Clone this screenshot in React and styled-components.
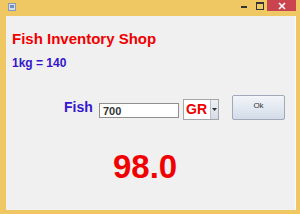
import React from 'react'
import styled, { createGlobalStyle } from 'styled-components'

const GlobalStyle = createGlobalStyle`
  html, body {
    margin: 0;
    padding: 0;
    background: #efc864;
  }
  body {
    font-family: "Liberation Sans", Arial, sans-serif;
  }
`

export default () => {
  return (
    <>
      <GlobalStyle />
      <Window>
        <TitleBar>
          <AppIcon viewBox="0 0 8 8">
            <rect x="0.5" y="0.5" width="7" height="7" fill="#d7dde8" stroke="#8c9bb5" strokeWidth="1" />
            <rect x="2" y="2" width="4" height="3" fill="#6f8fc4" />
          </AppIcon>
          <Spacer />
          <Minimize />
          <Maximize />
          <Close>
            <svg width="8" height="8" viewBox="0 0 8 8">
              <path d="M1 1 L7 7 M7 1 L1 7" stroke="#fff" strokeWidth="1.6" />
            </svg>
          </Close>
        </TitleBar>
        <Content>
          <Title>Fish Inventory Shop</Title>
          <Rate>1kg = 140</Rate>
          <Row>
            <FieldLabel>Fish</FieldLabel>
            <Input defaultValue="700" />
            <Combo>
              <ComboValue>GR</ComboValue>
              <ComboArrow>
                <svg width="5" height="3" viewBox="0 0 5 3">
                  <path d="M0 0 L5 0 L2.5 3 Z" fill="#333" />
                </svg>
              </ComboArrow>
            </Combo>
            <OkButton>Ok</OkButton>
          </Row>
          <Result>98.0</Result>
        </Content>
      </Window>
    </>
  )
}

const Window = styled.div`
  width: 300px;
  height: 214px;
  display: flex;
  flex-direction: column;
  background: #efc864;
  box-sizing: border-box;
  padding: 0 4px 4px 6px;
`

const TitleBar = styled.div`
  height: 16px;
  display: flex;
  align-items: flex-start;
`

const AppIcon = styled.svg`
  width: 8px;
  height: 8px;
  margin: 3px 0 0 2px;
`

const Spacer = styled.div`
  flex: 1;
`

const Minimize = styled.div`
  width: 6px;
  height: 2px;
  background: #333;
  margin: 6px 9px 0 0;
`

const Maximize = styled.div`
  width: 6px;
  height: 5px;
  border: 1px solid #333;
  border-top-width: 2px;
  margin: 2px 3px 0 0;
`

const Close = styled.div`
  width: 29px;
  height: 11px;
  background: #c9444f;
  display: flex;
  align-items: center;
  justify-content: center;
`

const Content = styled.div`
  flex: 1;
  background: #f0f0f0;
  border-right: 1px solid #fbfbfb;
  padding: 14px 0 0 6px;
  display: flex;
  flex-direction: column;
  align-items: flex-start;
`

const Title = styled.div`
  color: #f00000;
  font-weight: bold;
  font-size: 15px;
  line-height: 17px;
`

const Rate = styled.div`
  color: #3416cc;
  font-weight: bold;
  font-size: 12px;
  line-height: 14px;
  margin-top: 9px;
`

const Row = styled.div`
  display: flex;
  align-items: flex-end;
  margin-top: 25px;
  padding-left: 52px;
  height: 25px;
`

const FieldLabel = styled.div`
  color: #3416cc;
  font-weight: bold;
  font-size: 14px;
  line-height: 16px;
  margin-bottom: 5px;
  width: 35px;
`

const Input = styled.input`
  width: 80px;
  height: 15px;
  box-sizing: border-box;
  border: 1px solid #8f8f8f;
  background: #fff;
  padding: 0 0 0 3px;
  margin: 0 4px 2px 0;
  font-family: "Liberation Sans", Arial, sans-serif;
  font-weight: bold;
  font-size: 11px;
  color: #333;
  outline: none;
`

const Combo = styled.div`
  width: 36px;
  height: 21px;
  box-sizing: border-box;
  border: 1px solid #a6a6a6;
  background: #fff;
  display: flex;
  margin-right: 13px;
`

const ComboValue = styled.div`
  flex: 1;
  color: #f00000;
  font-weight: bold;
  font-size: 14px;
  line-height: 19px;
  padding-left: 2px;
`

const ComboArrow = styled.div`
  width: 7px;
  background: linear-gradient(to bottom, #edf0f5, #d6dde7);
  border-left: 1px solid #b8c2cf;
  display: flex;
  align-items: center;
  justify-content: center;
`

const OkButton = styled.button`
  width: 53px;
  height: 25px;
  box-sizing: border-box;
  border: 1px solid #9fa9b8;
  border-radius: 2px;
  background: linear-gradient(to bottom, #f2f5f9 0%, #e3e9f1 50%, #d3dce8 100%);
  font-family: "Liberation Sans", Arial, sans-serif;
  font-size: 8px;
  color: #333;
  padding: 0 0 4px 0;
`

const Result = styled.div`
  color: #f00000;
  font-weight: bold;
  font-size: 33px;
  line-height: 36px;
  margin: 29px 0 0 101px;
`
